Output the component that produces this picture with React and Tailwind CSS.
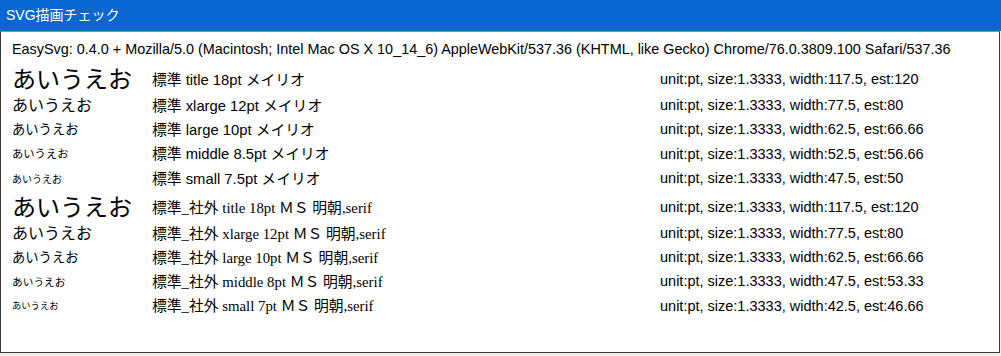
import React from "react";

const sansRows = [
  { size: "text-[24px]", h: "h-7", label: "標準 title 18pt メイリオ", info: "unit:pt, size:1.3333, width:117.5, est:120" },
  { size: "text-[16px]", h: "h-6", label: "標準 xlarge 12pt メイリオ", info: "unit:pt, size:1.3333, width:77.5, est:80" },
  { size: "text-[13.3px]", h: "h-6", label: "標準 large 10pt メイリオ", info: "unit:pt, size:1.3333, width:62.5, est:66.66" },
  { size: "text-[11.3px]", h: "h-[25px]", label: "標準 middle 8.5pt メイリオ", info: "unit:pt, size:1.3333, width:52.5, est:56.66" },
  { size: "text-[10px]", h: "h-6", label: "標準 small 7.5pt メイリオ", info: "unit:pt, size:1.3333, width:47.5, est:50" },
];

const serifRows = [
  { size: "text-[24px]", h: "h-7", label: "標準_社外 title 18pt ＭＳ 明朝,serif", info: "unit:pt, size:1.3333, width:117.5, est:120" },
  { size: "text-[16px]", h: "h-6", label: "標準_社外 xlarge 12pt ＭＳ 明朝,serif", info: "unit:pt, size:1.3333, width:77.5, est:80" },
  { size: "text-[13.3px]", h: "h-6", label: "標準_社外 large 10pt ＭＳ 明朝,serif", info: "unit:pt, size:1.3333, width:62.5, est:66.66" },
  { size: "text-[10.7px]", h: "h-6", label: "標準_社外 middle 8pt ＭＳ 明朝,serif", info: "unit:pt, size:1.3333, width:47.5, est:53.33" },
  { size: "text-[9.3px]", h: "h-[25px]", label: "標準_社外 small 7pt ＭＳ 明朝,serif", info: "unit:pt, size:1.3333, width:42.5, est:46.66" },
];

const SANS = "font-['Liberation_Sans','Noto_Sans_CJK_JP',sans-serif]";
const SERIF = "font-['Liberation_Serif','Noto_Sans_CJK_JP',serif]";

const Row = ({ row, serif }) => (
  <div className={`flex items-center ${row.h} text-black`}>
    <div className={`w-[140px] whitespace-nowrap ${row.size} ${serif ? SERIF : SANS}`}>
      あいうえお
    </div>
    <div className={`w-[508px] whitespace-nowrap text-[14.8px] ${serif ? SERIF : SANS}`}>
      {row.label}
    </div>
    <div className={`whitespace-nowrap text-[14.5px] ${SANS}`}>{row.info}</div>
  </div>
);

const App = () => {
  return (
    <div className={`w-[1001px] h-[356px] bg-[#f1eded] ${SANS}`}>
      <div className="h-[31px] bg-[#0a66d0] text-white text-[14px] flex items-center pl-[6px]">
        SVG描画チェック
      </div>
      <div className="w-[1000px] h-[322px] bg-white border border-[#3a3a3a] border-t-[#8c8c8c] pl-[11px]">
        <div className="pt-[8px] h-[28px] text-[14.4px] text-black whitespace-nowrap flex items-center">
          EasySvg: 0.4.0 + Mozilla/5.0 (Macintosh; Intel Mac OS X 10_14_6) AppleWebKit/537.36 (KHTML, like Gecko) Chrome/76.0.3809.100 Safari/537.36
        </div>
        <div className="mt-[6px]">
          {sansRows.map((r) => (
            <Row key={r.label} row={r} />
          ))}
        </div>
        <div className="mt-[3px]">
          {serifRows.map((r) => (
            <Row key={r.label} row={r} serif />
          ))}
        </div>
      </div>
    </div>
  );
};

export default App;
